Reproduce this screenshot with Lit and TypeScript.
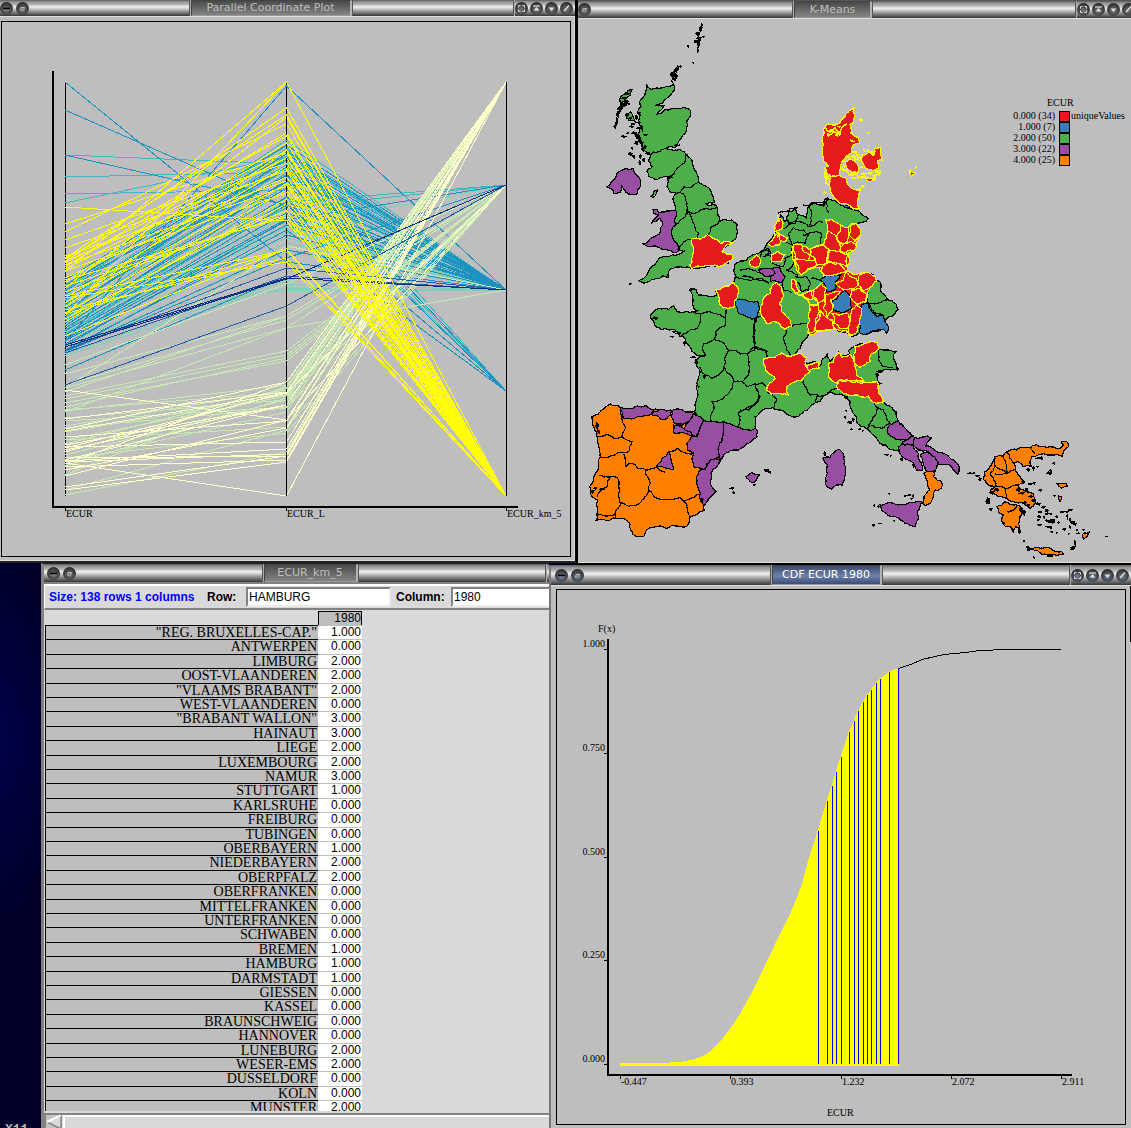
import { LitElement, html, svg, css } from "lit";
import { customElement, property } from "lit/decorators.js";

type Pt = [number, number];

/* ---------- title bar ---------- */

const GLYPHS: Record<string, unknown> = {
  minus: svg`<path d="M3 6.5H10" stroke="#000" stroke-width="1.6"/><path d="M3 8H10" stroke="#999" stroke-width=".6"/>`,
  menu: svg`<path d="M4 8.500L5 5H9L8 8.500Z" fill="#bbb"/><path d="M5.500 7H7.500" stroke="#333"/>`,
  full: svg`<path d="M3.500 5.500V3.500H5.500M7.500 3.500H9.500V5.500M9.500 7.500V9.500H7.500M5.500 9.500H3.500V7.500" fill="none" stroke="#ddd"/>`,
  shade: svg`<path d="M3 4H10" stroke="#ddd" stroke-width="1.200"/><path d="M6.500 5L9.500 8.500H3.500Z" fill="#ddd"/>`,
  down: svg`<path d="M3.500 5.500H9.500L6.500 9Z" fill="#ddd"/>`,
  close: svg`<path d="M4 9L9 3.500" stroke="#ddd" stroke-width="1.500"/>`,
};

const NAMES: Record<string, string> = {
  minus: "Iconify",
  menu: "Window menu",
  full: "Full screen",
  shade: "Shade",
  down: "Lower",
  close: "Close",
};

@customElement("title-bar")
class TitleBar extends LitElement {
  @property() caption = "";
  @property({ attribute: false }) left: string[] = ["minus", "menu"];
  @property({ attribute: false }) right: string[] = ["full", "shade", "down", "close"];

  static styles = css`
    :host {
      display: flex;
      align-items: stretch;
      flex: none;
      overflow: hidden;
      background: linear-gradient(#5c5c5c 0, #949494 12%, #b4b4b4 28%, #ededed 42%, #d6d6d6 52%, #a4a4a4 66%, #6a6a6a 84%, #343434 100%);
    }
    .group {
      display: flex;
      align-items: center;
      flex: none;
      gap: 3px;
      padding-left: var(--lead, 0);
    }
    .tray {
      display: flex;
      align-items: center;
      flex: none;
      gap: 2px;
      box-sizing: border-box;
      width: var(--tray, 62px);
      padding-left: 1px;
      border-left: 1px solid #555;
      box-shadow: inset 1px 0 #aaa;
    }
    .middle {
      flex: 1;
      display: flex;
      justify-content: center;
    }
    .plate {
      box-sizing: border-box;
      min-width: var(--plate, 94px);
      margin: 0;
      display: flex;
      align-items: center;
      justify-content: center;
      font: 11px/12px "DejaVu Sans", sans-serif;
      color: var(--ink, #bebebe);
      background: var(--plate-fill, linear-gradient(#4a4a4a, #848484));
      border: 1px solid #444;
      border-right: 2px solid #b4b4b4;
      border-bottom-color: #999;
      box-shadow: -1px 0 #aaa, -2px 0 #555, 1px 0 #555;
      white-space: nowrap;
    }
    button {
      flex: none;
      width: 13px;
      height: 13px;
      padding: 0;
      border: 0;
      border-radius: 50%;
      background: radial-gradient(circle at 50% 60%, var(--knob, #777), #333 65%, #000);
    }
    svg {
      display: block;
    }
  `;

  private knob(kind: string) {
    return html`<button aria-label=${NAMES[kind]}>
      <svg width="13" height="13" viewBox="0 0 13 13">${GLYPHS[kind]}</svg>
    </button>`;
  }

  render() {
    return html`
      <div class="group">${this.left.map((k) => this.knob(k))}</div>
      <div class="middle"><h2 class="plate">${this.caption}</h2></div>
      <div class="tray">${this.right.map((k) => this.knob(k))}</div>
    `;
  }
}

/* ---------- parallel coordinate plot ---------- */

const CREAM = "#ffffcc";
const LIME = "#c7e9b4";
const TEAL = "#7fcdbb";
const AQUA = "#41b6c4";
const BLUE = "#1d91c0";
const ROYAL = "#225ea8";
const NAVY = "#0c2c84";
const GOLD = "#ffff00";

/* Each record: colour, height on the third axis, then pairs of heights on the first two. */
const RECORDS: [string, number, string][] = [
  [TEAL, 290, "296,215 310,218 322,228 325,232 328,238 335,230 332,226 340,216 345,243 350,252 356,284 338,288 319,290"],
  [TEAL, 185, "318,227 354,280"],
  [AQUA, 290, "155,164 177,172 194,190 203,157 290,140 295,145 301,149 306,156 313,160 318,168 322,173 326,181 330,185 334,198 338,188 285,152 300,170"],
  [AQUA, 185, "320,208 334,202"],
  [AQUA, 391, "282,146 305,175 298,165"],
  [BLUE, 290, "82,262 110,207 155,205 342,86 280,145 286,151 291,154 299,160 304,167 309,175 316,182 323,188 328,197 331,202 335,213 338,219 341,221 344,225 350,235 352,250 286,170 294,176"],
  [BLUE, 185, "346,220 352,258"],
  [BLUE, 391, "312,158 326,180 340,205 352,230"],
  [BLUE, 290, "370,276"],
  [LIME, 185, "365,284 374,316 385,320 388,328 392,316 396,351 399,355 403,361 407,358 411,385 418,400 421,407 426,390 432,395 440,427 458,433"],
  [LIME, 290, "388,246 412,328"],
  [LIME, 82, "475,386 455,400 490,430 495,452 466,398 444,388 410,392 440,396 428,408 462,412"],
  [CREAM, 82, "429,382 431,393 437,421 390,420 419,392 445,405 447,442 450,405 460,405 461,449 452,392 458,456 462,454 464,382 470,428 487,456 490,462 467,460 463,496"],
  [CREAM, 185, "448,393 476,420"],
  [ROYAL, 185, "385,306"],
  [ROYAL, 290, "350,268 353,276"],
  [NAVY, 290, "345,278"],
  [NAVY, 185, "347,279"],
  [GOLD, 496, "272,82 316,82 262,108 258,115 288,117 232,124 267,133 259,136 282,143 263,151 224,153 307,150 269,158 240,163 298,166 261,169 248,171 278,177 256,181 303,184 265,186 313,190 271,193 322,199 319,204 292,211 286,215 280,217 207,221 336,249 314,250 296,250 310,258 298,262"],
];

const AXES = [65, 286, 506];

@customElement("parallel-plot")
class ParallelPlot extends LitElement {
  static styles = css`
    :host {
      display: flex;
      flex: 1;
      min-height: 0;
    }
    svg {
      flex: 1;
      min-width: 0;
    }
    text {
      font: 10px "Liberation Serif", serif;
    }
  `;

  render() {
    return html`<svg viewBox="0 17 574 543" role="img" aria-label="Parallel coordinate plot of ECUR">
      <g shape-rendering="crispEdges" fill="none" stroke="#000">
        <rect x="1.500" y="21.500" width="569" height="535" />
        <path d="M53 71V507H518" stroke-width="2" />
        ${AXES.map((x) => svg`<path d="M${x + 0.5} 82V496M${x + 0.5} 507v4"/>`)}
        ${RECORDS.map(([color, end, pairs]) =>
          pairs.split(" ").map((p) => {
            const [a, b] = p.split(",");
            return svg`<path stroke=${color} d="M65 ${a}L286.500 ${b}L506 ${end}"/>`;
          })
        )}
        <path d="M286.500 88V496" stroke-dasharray="5 2 3 4" />
      </g>
      <text x="66" y="517">ECUR</text>
      <text x="287" y="517">ECUR_L</text>
      <text x="507" y="517">ECUR_km_5</text>
    </svg>`;
  }
}

/* ---------- choropleth map ---------- */

/* The outlines are digitised on four sheets, three units to the pixel.
   A letter in a path switches to the sheet with that origin. */
const SHEETS: Record<string, Pt> = { a: [577, 0], b: [740, 90], c: [577, 270], d: [740, 330] };

function digitise(src: string): Pt[] {
  let origin: Pt = [0, 0];
  const pts: Pt[] = [];
  for (const token of src.trim().split(/\s+/)) {
    if (SHEETS[token]) {
      origin = SHEETS[token];
      continue;
    }
    const [x, y] = token.split(",").map(Number);
    pts.push([origin[0] + x / 3, origin[1] + y / 3]);
  }
  return pts;
}

/* Midpoint displacement seeded by the two ends, so a shared border stays shared. */
function wiggle(p: Pt, q: Pt, out: Pt[]) {
  const dx = q[0] - p[0];
  const dy = q[1] - p[1];
  const len = Math.hypot(dx, dy);
  if (len > 3) {
    const seed = Math.sin((p[0] + q[0]) * 12.9898 + (p[1] + q[1]) * 78.233) * 43758.5453;
    const k = (seed - Math.floor(seed) - 0.5) * 0.3;
    const flip = dx < 0 || (dx === 0 && dy < 0) ? -1 : 1;
    const m: Pt = [(p[0] + q[0]) / 2 - dy * k * flip, (p[1] + q[1]) / 2 + dx * k * flip];
    wiggle(p, m, out);
    wiggle(m, q, out);
  } else {
    out.push(q);
  }
}

function trace(src: string, closed: boolean): string {
  const pts = digitise(src);
  const out: Pt[] = [pts[0]];
  for (let i = 1; i < pts.length; i++) wiggle(pts[i - 1], pts[i], out);
  if (closed) wiggle(pts[pts.length - 1], pts[0], out);
  return "M" + out.map(([x, y]) => x.toFixed(1) + " " + y.toFixed(1)).join("L") + (closed ? "Z" : "");
}

const RED = "#e41a1c";
const STEEL = "#377eb8";
const GREEN = "#4daf4a";
const PURPLE = "#984ea3";
const ORANGE = "#ff7f00";

const GREENS = [
  "a 210,257 222,268 240,264 262,262 275,260 290,252 292,270 280,285 262,300 248,312 235,316 260,318 250,332 240,342 262,330 285,326 310,326 338,328 340,345 330,362 328,385 318,405 305,425 295,436 308,434 290,442 262,446 290,452 310,450 325,460 345,480 350,500 358,520 364,545 385,556 400,570 408,590 412,606 385,610 415,615 422,635 428,655 425,665 440,658 465,660 480,672 481,692 478,712 465,724 440,745 435,755 465,765 455,790 400,797 345,805 335,802 312,800 290,805 280,808 275,832 255,828 232,838 215,845 200,850 185,842 205,830 215,815 232,795 245,775 275,770 300,765 325,752 306,752 300,730 288,715 285,690 296,675 292,658 300,642 295,630 292,610 290,590 298,580 278,575 270,560 272,540 285,532 260,530 235,538 215,528 210,515 225,500 215,480 222,465 205,455 195,440 190,420 185,400 192,380 185,365 190,345 182,335 192,320 188,305 200,290 205,275",
  "b 262,325 285,332 310,348 330,356 355,362 372,378 384,386 370,396 352,400 362,425 358,440 348,462 345,480 325,487 328,505 322,530 320,545 345,555 375,548 400,555 410,570 422,578 420,600 440,625 470,645 475,658 455,680 440,685 435,700 445,720 440,730 430,718 400,725 375,735 358,728 335,740 320,725 290,718 250,722 215,735 205,735 200,745 185,765 d 180,55 165,75 185,75 200,100 232,98 238,110 250,85 262,72 268,95 272,92 295,68 300,80 330,75 325,62 345,48 370,42 410,38 415,58 435,60 468,66 460,85 468,105 475,118 445,118 420,125 408,135 412,150 422,160 412,165 418,200 430,212 455,232 468,245 475,275 495,300 520,320 500,345 478,358 450,358 420,340 400,315 380,295 350,275 340,250 330,215 320,200 300,192 270,185 250,200 240,215 215,225 185,250 175,260 145,255 115,240 80,235 45,260 45,290 c 535,475 500,478 480,470 440,455 410,455 380,450 352,425 355,410 362,370 365,320 368,300 360,290 355,270 385,258 345,245 330,220 325,205 310,200 300,185 270,178 235,170 230,155 220,135 235,120 275,118 290,108 300,125 330,125 365,122 350,115 348,90 338,60 358,60 365,75 400,80 420,75 415,60 440,50 470,38 475,15 a 472,795 490,783 510,778 525,765 545,760 565,742 580,720 598,690 b 112,395 122,375 135,395 140,385 145,365 165,358 180,375 200,385 205,350 225,340 250,345",
  "a 222,590 230,575 240,570 238,580 228,592",
  "a 165,268 160,285 140,305 130,312 128,298 145,280",
  "a 145,345 160,335 168,350 175,365 155,360",
  "a 280,220 290,215 295,235 285,240",
];

const PURPLES = [
  "a 228,630 240,628 245,638 262,636 280,632 295,630 300,642 292,658 296,675 285,690 288,715 300,730 306,752 290,758 275,752 255,748 235,738 215,740 200,732 215,722 235,708 248,702 250,688 255,665 248,655 225,668 230,658 240,650 245,645 230,640",
  "a 90,560 105,545 120,520 140,508 170,505 178,525 192,540 190,560 180,582 155,582 145,575 135,560 128,578 110,580",
  "b 55,538 95,535 105,550 85,560 60,548",
  "b 95,535 118,532 122,542 135,560 120,578 92,575 90,560 105,550",
  "d 450,285 475,272 505,305 520,320 500,330 480,330 455,320 442,310",
  "d 500,330 520,318 525,325 520,345 485,340",
  "d 525,322 575,322 558,348 600,368 640,390 658,412 652,432 640,420 628,405 590,400 570,370 535,360 520,345",
  "d 475,350 485,342 520,347 535,370 545,400 548,420 530,420 515,395 485,380",
  "d 540,375 565,368 595,400 585,425 560,425 550,400",
  "d 420,525 445,518 475,525 500,522 530,515 545,515 532,545 530,575 525,590 495,580 465,560 425,542",
  "d 248,385 270,382 295,358 310,372 312,400 308,465 290,465 275,478 260,470 262,430 262,405",
  "d 18,440 35,428 58,435 50,450 40,458 25,448",
  "d 75,422 92,425 92,430",
];

const IBERIA =
  "c 542,485 540,500 505,525 470,540 440,555 432,570 420,590 402,610 400,640 418,665 395,685 380,705 382,722 355,735 340,740 330,768 300,768 235,770 205,785 200,800 180,800 160,780 158,760 140,745 115,745 95,752 58,750 60,730 62,690 40,670 38,650 50,625 65,595 70,560 62,520 60,490 50,470 45,440 75,420 100,402 130,412 180,408 230,418 280,420 300,425 330,425 352,425 380,450 410,455 440,455 480,470 500,478 535,475";

const SPANISH = [
  "c 130,412 180,408 230,418 222,432 190,440 165,447 140,445",
  "c 222,432 230,425 250,418 285,422 280,435 258,450 245,440",
  "c 285,422 310,418 350,430 335,455 315,465 290,458",
  "c 350,430 380,450 370,470 358,500 340,485 320,475 335,455",
  "c 290,465 320,475 340,485 345,497 325,490 290,488",
  "c 380,450 410,455 440,455 438,490 425,530 430,560 408,568 380,600 350,590 345,570 350,550 330,540 330,520 345,500 360,500 370,470",
  "c 440,455 480,470 500,478 535,475 542,485 540,500 505,525 470,540 440,555 430,570 425,530 438,490",
  "c 400,570 430,570 420,590 402,610 400,640 418,665 395,685 380,710 370,670 358,640 358,620 370,600 385,598",
  "c 238,590 255,565 275,545 285,580 288,600 260,592",
];

const ORANGES = [
  "d 552,430 560,425 583,422 580,440 605,455 605,475 585,480 580,495 570,520 555,528 548,520 555,495 570,480 560,450",
  "d 965,335 980,335 985,350 970,365 968,380 930,375 905,372 875,380 870,400 875,410 850,410 835,395 822,400 825,420 840,440 850,460 830,465 850,480 880,490 885,508 880,530 870,535 850,520 820,515 800,505 775,500 760,490 750,480 765,470 740,460 730,445 735,425 750,410 765,380 790,378 800,365 830,360 850,352 885,345 920,352 960,355 970,345",
  "d 770,530 795,515 830,525 845,535 840,560 835,580 842,610 828,590 820,605 812,590 795,588 785,570 790,555 775,545",
  "d 860,650 880,655 900,655 935,658 965,665 970,672 935,675 900,668 862,662",
  "d 1030,610 1048,605 1040,620 1030,628",
  "d 952,462 978,460 982,470 965,475",
  "d 955,498 965,500 960,515",
  "d 925,572 942,570 938,580",
];

const BLUES = [
  "c 475,90 500,88 540,95 550,115 540,140 525,148 505,138 485,130 478,110",
  "b 240,570 260,555 305,552 288,575 285,600 260,605 255,585",
  "b 275,635 305,608 315,600 332,630 335,655 310,668 280,660",
  "b 365,645 385,640 395,665 410,680 430,678 435,695 445,720 440,730 430,718 400,722 375,735 358,728 358,690",
  "b 312,350 328,346 330,355",
];

/* Ground under the German cluster, so that neighbouring regions meet without a gap. */
const RED_GROUND =
  "b 258,390 275,388 300,405 325,412 335,402 350,400 362,425 358,440 348,462 345,480 320,490 328,505 322,530 320,545 345,555 375,548 405,560 410,572 390,592 382,605 378,635 362,655 358,700 350,728 332,738 320,722 290,718 250,722 215,735 205,730 210,690 208,645 235,642 220,625 195,624 188,612 220,600 245,580 255,562 242,545 240,532 205,538 185,555 175,545 165,515 160,465 185,465 210,480 250,465 262,425";

const REDS = [
  "a 346,715 370,718 392,704 408,716 430,730 455,725 466,728 440,745 435,755 465,765 468,775 450,788 440,795 425,800 400,797 370,800 345,805 338,795 345,785 350,755 346,735",
  "b 343,53 338,65 345,80 340,98 330,104 333,130 355,142 358,160 338,168 332,190 315,205 302,225 300,255 272,258 260,250 255,235 265,228 250,212 247,190 250,165 248,140 252,115 265,102 300,98 315,80 328,62",
  "b 272,260 300,255 318,265 325,285 350,300 362,295 355,320 357,355 340,357 325,345 300,340 280,320 272,300 268,280",
  "b 315,215 330,205 345,215 357,235 352,248 330,242",
  "b 366,195 385,188 402,195 405,175 420,172 425,205 412,212 415,235 400,242 385,238 370,222",
  "b 365,260 375,258 390,265 400,270 385,275",
  "b 508,238 526,250 515,258",
  "b 160,465 185,465 190,485 210,495 205,510 180,512 165,500",
  "b 165,510 200,512 225,510 232,525 205,535 185,555 175,545",
  "b 212,475 235,468 265,472 262,500 258,520 232,525 225,505 210,495",
  "b 258,390 275,388 300,405 290,440 262,425",
  "b 300,405 325,412 328,435 310,462 298,455 290,440",
  "b 335,402 350,400 362,425 358,440 345,455 328,435",
  "b 262,425 285,435 300,460 298,485 270,480 250,465",
  "b 310,462 330,455 348,462 345,480 318,488 300,480",
  "b 270,482 298,485 325,495 320,530 300,522 262,510",
  "b 245,545 262,515 300,522 318,545 300,550 255,558",
  "b 288,580 310,570 318,548 350,565 355,585 340,598 310,600",
  "b 355,562 375,548 405,560 410,572 390,592 370,602 355,585",
  "b 335,600 360,595 380,610 375,635 350,642 330,620",
  "b 220,600 245,580 258,595 255,625 235,640 220,620",
  "b 188,612 212,602 218,628 195,622",
  "b 255,615 300,605 272,630 278,660 262,680 250,655",
  "b 208,645 235,645 238,665 222,725 205,728 210,690",
  "b 240,660 258,680 278,690 284,715 250,722 225,722",
  "b 275,670 320,668 328,690 322,715 300,715 285,700",
  "b 335,660 350,645 365,655 358,700 350,728 332,735 325,715 330,690",
  "b 155,568 168,575 180,605 165,608 155,595",
  "b 110,395 122,385 128,415 105,425 106,405",
  "b 84,462 105,432 120,445 118,465 95,470",
  "b 118,432 142,442 135,455 120,450",
  "b 28,512 50,495 62,510 55,530 35,530",
  "b 93,495 115,484 134,495 125,514 95,516",
  "b 110,578 125,592 130,620 118,640 125,665 150,690 155,710 135,718 118,700 80,700 65,680 62,650 75,620 90,610 95,590",
  "c 415,60 440,50 468,38 480,50 482,80 470,112 450,115 430,105 425,80",
  "d 72,85 105,82 125,68 140,78 165,75 185,72 200,85 195,105 210,125 190,145 165,155 140,170 145,195 120,190 95,192 80,180 85,165 105,145 85,130 75,110",
  "d 200,108 235,98 238,115 205,122",
  "d 265,100 280,98 295,68 305,82 330,72 342,90 345,110 350,135 375,155 350,150 300,148 290,160 265,140 270,120",
  "d 345,50 370,42 412,38 415,58 395,70 390,95 360,112 345,100 340,75",
  "d 298,150 350,155 412,155 415,190 430,215 402,218 385,198 345,195 310,190 290,172",
];

/* Region borders and coastal scraps inked in black. */
const BORDERS = [
  "a 215,465 245,455 262,446",
  "a 325,460 322,490 300,505 290,522 270,535",
  "a 364,545 345,560 320,560 310,578 298,580",
  "a 310,578 325,590 330,610 330,630 345,640 400,628 420,622",
  "a 330,630 325,650 310,660 296,675",
  "a 332,635 345,660 355,690 365,700 360,715",
  "a 395,704 400,685 425,670 428,655",
  "a 300,750 320,725 346,718",
  "c 60,500 90,492 110,505 135,500 165,515 155,545 120,550 70,560",
  "c 135,500 145,475 135,450 130,412",
  "c 140,552 145,590 165,580 205,600 220,640 215,660 195,690 180,705 130,698 128,660 122,625 100,620 65,615",
  "c 205,600 240,592 265,607",
  "c 215,660 240,685 310,682 330,705 340,740",
  "c 315,692 330,690 365,672",
  "c 130,698 115,725 115,745",
  "c 58,735 90,738 115,730",
  "c 100,620 90,650 62,680",
  "c 275,545 300,535 350,550",
  "c 475,15 500,28 545,30 575,40",
  "c 345,125 375,130 405,128 430,135 445,145 450,115",
  "c 370,130 368,160 360,175 325,190 310,200",
  "c 445,145 440,170 415,185 412,208 380,220 385,258",
  "c 412,208 440,220 455,240 490,252 515,250 535,235 528,200 530,165 540,140",
  "c 455,240 440,290 430,310 405,325 385,315 368,290",
  "c 440,290 465,320 470,335 495,335 510,320 515,270 510,252",
  "c 470,335 455,370 440,385 405,395 410,420 402,452",
  "c 495,335 510,350 535,345 545,380 520,410 485,430 485,470",
  "c 535,235 570,245 570,260",
  "c 535,345 555,338 568,350",
  "d 20,72 40,52 75,62 82,80",
  "d 40,0 45,52",
  "b 62,680 45,685 40,720",
  "d 140,0 135,40 150,75",
  "b 135,718 140,725",
  "b 205,700 165,702 155,710",
  "d 45,160 60,200 45,225 25,240 0,240",
  "d 80,185 110,205 100,235",
  "d 190,150 200,175 210,195 240,200 275,180 290,175",
  "d 225,215 230,200 250,200",
  "d 415,60 415,90 430,110 460,112",
  "d 402,220 412,235 400,260 390,280 380,295",
  "d 410,232 430,240 440,265 450,280 425,295 395,285",
  "d 765,385 765,410 800,430 800,405 790,380",
  "d 765,410 750,432 770,470 800,475 835,465",
  "d 800,365 810,385 822,400",
  "d 868,352 885,372",
  "d 765,432 800,430 825,418",
  "d 795,475 800,505",
  "d 800,545 820,540 835,525",
  "b 385,640 410,640 440,630",
  "b 382,600 385,640",
  "b 388,640 395,660 430,678",
  "b 262,325 265,370",
  "b 205,350 215,375 208,410",
  "b 140,385 145,400 175,395 205,410 235,395 250,400",
  "b 155,465 145,430 160,412 190,420 205,435",
  "b 190,435 225,425 245,430 245,465",
  "b 205,435 195,460 160,462",
  "b 175,375 165,400 140,410 128,415",
  "b 135,455 160,465 155,495 135,505 130,530",
  "b 155,495 165,510 140,540 175,555",
  "b 165,560 200,560 212,580 205,600 185,605 170,575",
  "b 212,565 240,570",
  "b 5,560 45,570 85,575",
  "b 0,540 60,548",
  "b 60,500 70,480 88,485 75,495 95,500",
  "b 65,485 85,475 92,490 70,500",
  "b 90,515 110,525 130,530",
  "b 125,575 130,600 155,608",
  "b 115,370 150,356 175,352",
  "b 190,345 225,336 250,338 258,325",
  "b 250,350 262,322",
];

const YELLOW_SCRAPS = [
  "b 255,110 270,128 285,112 300,130 320,100",
  "b 265,135 285,125 300,135",
  "b 360,85 368,92",
  "b 383,127 388,129",
  "b 335,185 350,190 360,205",
  "b 350,250 355,262 330,262",
  "b 370,180 390,185 405,190",
  "b 330,150 345,155",
  "b 420,240 415,252 400,258 405,270",
  "b 305,232 318,240 330,255",
  "b 255,262 260,280 270,290",
  "b 365,285 372,290",
  "b 340,195 352,208 362,212",
  "b 258,240 254,258 262,270",
  "b 108,425 118,432 112,445",
  "b 112,375 118,395",
  "b 165,608 190,620 210,640",
];

/* Islands too small to fill: sheet, then x,y centre and the length and height of each scrap. */
const ISLETS = [
  "a 374,75,4,10 372,84,8,8 370,90,8,10 362,102,12,12 366,115,14,8 364,125,10,10 355,125,8,8 364,135,7,14 362,152,3,16 333,139,4,5 349,188,3,3 380,110,5,3",
  "a 303,202,6,8 299,207,8,8 296,212,8,10 288,225,12,12 298,228,8,10 292,238,12,8 311,200,3,8 285,245,5,4",
  "a 150,282,12,4 142,295,16,6 150,305,10,6 145,312,12,8 138,315,16,8 132,322,12,8 128,328,14,10 124,338,8,10 122,345,8,12 120,362,6,14 117,372,6,8 113,380,6,10 155,312,5,4",
  "a 150,345,10,10 160,355,8,6 168,372,10,6 178,352,8,12 185,340,8,8 185,368,10,6 165,380,12,5 172,400,14,8 180,408,12,12 140,410,14,5 185,415,12,12 188,424,10,10 178,430,8,10 195,430,8,8 205,405,10,6 160,462,12,8 170,470,8,8 190,470,6,12 188,488,5,12 200,480,6,10 212,460,10,8 205,440,6,8 198,448,8,12 165,445,5,5 152,400,6,5 195,385,4,14 185,385,10,6",
  "a 160,852,5,4 345,868,20,4",
  "c 350,262,12,3 358,278,10,8 322,220,6,10 305,190,12,4 285,200,6,3 235,145,14,8 290,185,8,3 370,305,6,3 382,320,6,8 365,350,4,4",
  "c 60,470,8,20 65,485,6,10 45,665,12,10 55,655,8,6 75,658,18,3 308,465,20,10 375,690,8,10",
  "c 465,655,10,5 470,668,5,5 530,645,6,2 565,600,10,2",
  "d 254,372,5,12 330,278,12,8 340,270,5,10 315,262,4,4 318,242,4,2 335,298,4,3 360,298,6,3 368,302,4,3 440,374,10,3 452,378,4,3 485,388,6,8 520,405,4,10",
  "d 420,125,18,8 412,135,10,8 472,117,8,8 318,202,10,8",
  "d 448,491,3,2 495,498,5,3 508,496,7,4 520,498,4,8 515,506,6,3 403,527,3,5 415,530,5,5 400,586,6,5 422,580,8,2 462,572,3,3",
  "d 690,430,10,3 702,430,6,3 712,438,10,6 720,448,8,8 745,510,10,12 740,515,6,6 752,538,8,8 755,488,14,10 745,520,8,4 770,480,14,8",
  "d 850,455,10,6 870,462,12,5 882,460,8,6 835,480,14,8 860,480,8,12 845,490,14,6 872,500,10,6 880,512,12,5 895,522,14,6 910,532,10,6 920,542,10,8 932,552,6,6 850,548,14,14 842,540,10,14 855,518,8,6 865,525,8,6 865,420,10,8 880,415,6,10 892,410,6,4 895,385,14,4 905,385,6,10",
  "d 942,400,7,4 928,430,14,8 932,422,6,6 901,481,8,8 943,498,4,3 965,546,12,4 980,545,8,3 990,540,12,6 900,546,10,5 920,552,8,5 898,560,10,5 912,562,5,5 895,570,6,6 898,585,10,6 920,572,8,6 930,576,10,4 942,574,6,5 922,590,12,4 932,592,6,8 950,560,6,5 955,578,5,5 972,598,8,5 935,605,6,4 950,608,4,3 982,560,4,12 990,570,6,10 998,578,12,8 1005,582,8,6 990,590,4,6 1010,600,5,5 1015,610,6,3 1030,600,4,5 1100,619,4,2 985,612,4,2 1005,640,4,14 1000,652,12,6 997,658,8,4 852,633,4,4 838,605,6,12 818,600,5,10 882,683,3,4 930,678,20,2 865,655,6,10 790,580,6,8",
];

const YELLOW_DOTS = [
  "b 362,90,10,6 386,128,5,3 388,166,2,2 527,234,2,4 425,210,6,4 372,178,4,3 383,180,5,3 345,185,6,3 340,200,14,6 352,195,6,5 322,200,8,6 310,212,5,5 312,228,6,8 345,210,6,6 345,250,18,10 355,260,4,8 335,255,12,5 310,240,8,6 258,245,6,18 262,262,8,10 258,278,6,6 255,308,6,4 275,122,12,10 290,135,10,8 265,135,8,8 298,110,8,4 398,195,6,6 410,245,10,8 418,250,6,10 405,262,6,14 362,262,4,6 370,252,14,4 390,250,14,5 368,288,10,6 355,300,8,5 365,232,6,4 362,205,4,8",
];

function scraps(lists: string[], color: string) {
  return lists.map((line) => {
    const [sheet, ...items] = line.split(" ");
    const [ox, oy] = SHEETS[sheet];
    return items.map((item) => {
      const [x, y, w, h] = item.split(",").map(Number);
      const ring = [
        [x - w / 2, y],
        [x - w / 6, y - h / 2],
        [x + w / 2, y - h / 4],
        [x + w / 5, y + h / 2],
      ].map(([px, py]) => `${(ox + px / 3).toFixed(1)},${(oy + py / 3).toFixed(1)}`);
      return svg`<polygon points=${ring.join(" ")} fill=${color} stroke=${color} stroke-width="1"/>`;
    });
  });
}

const area = (fill: string, stroke: string) => (src: string) =>
  svg`<path d=${trace(src, true)} fill=${fill} stroke=${stroke}/>`;

const CLASSES: [string, string][] = [
  ["0.000 (34)", RED],
  ["1.000 (7)", STEEL],
  ["2.000 (50)", GREEN],
  ["3.000 (22)", PURPLE],
  ["4.000 (25)", ORANGE],
];

@customElement("cluster-map")
class ClusterMap extends LitElement {
  static styles = css`
    :host {
      display: flex;
      flex: 1;
      min-height: 0;
    }
    svg {
      flex: 1;
      min-width: 0;
    }
    text {
      font: 10px "Liberation Serif", serif;
    }
    .count {
      text-anchor: end;
    }
  `;

  render() {
    return html`<svg viewBox="578 19 553 543" role="img" aria-label="Map of European regions by cluster">
      <g shape-rendering="crispEdges" stroke-width="1.200">
        ${GREENS.map(area(GREEN, "#000"))} ${area(ORANGE, "#000")(IBERIA)}
        ${PURPLES.map(area(PURPLE, "#000"))} ${SPANISH.map(area(PURPLE, "#000"))}
        ${ORANGES.map(area(ORANGE, "#000"))}
        ${BORDERS.map((b) => svg`<path d=${trace(b, false)} fill="none" stroke="#000"/>`)}
        ${area(RED, "#ff0")(RED_GROUND)} ${BLUES.map(area(STEEL, "#000"))} ${REDS.map(area(RED, "#ff0"))}
        ${YELLOW_SCRAPS.map((b) => svg`<path d=${trace(b, false)} fill="none" stroke="#ff0" stroke-width="1.500"/>`)}
        ${scraps(ISLETS, "#000")} ${scraps(YELLOW_DOTS, "#ff0")}
      </g>
      <text x="1047" y="106">ECUR</text>
      ${CLASSES.map(
        ([label, fill], i) => svg`
          <text class="count" x="1055" y=${119 + i * 11}>${label}</text>
          <rect x="1059.500" y=${111.5 + i * 11} width="10" height="10" fill=${fill} stroke="#000"/>`
      )}
      <text x="1071" y="119">uniqueValues</text>
    </svg>`;
  }
}

/* ---------- cumulative distribution ---------- */

const CURVE: Pt[] = [
  [620, 1063], [660, 1063], [681, 1062], [691, 1060], [704, 1056], [713, 1049], [721, 1041], [730, 1029],
  [739, 1016], [754, 989], [764, 968], [776, 943], [787, 921], [793, 908], [802, 885], [809, 859],
  [818, 831], [827, 801], [832, 786], [836, 772], [841, 757], [849, 732], [854, 721], [858, 711],
  [863, 702], [867, 695], [871, 690], [876, 683], [880, 679], [889, 672], [898, 668], [911, 664],
  [922, 659], [944, 654], [965, 652], [980, 650], [1007, 649], [1061, 649],
];

const MARKS = CURVE.filter(([x]) => x >= 818 && x <= 898);
const Y_TICKS: [number, string][] = [[649, "1.000"], [753, "0.750"], [857, "0.500"], [960, "0.250"], [1064, "0.000"]];
const X_TICKS: [number, string][] = [[620, "-0.447"], [730, "0.393"], [841, "1.232"], [951, "2.072"], [1061, "2.911"]];

@customElement("cdf-plot")
class CdfPlot extends LitElement {
  static styles = css`
    :host {
      display: flex;
      flex: 1;
      min-height: 0;
    }
    svg {
      flex: 1;
      min-width: 0;
    }
    text {
      font: 10px "Liberation Serif", serif;
    }
    .side {
      text-anchor: end;
    }
  `;

  render() {
    const line = (pts: Pt[]) => pts.map(([x, y]) => `${x} ${y + 0.5}`).join("L");
    const filled = CURVE.filter(([x]) => x <= 898);
    return html`<svg viewBox="551 586 580 542" role="img" aria-label="Cumulative distribution of ECUR, 1980">
      <g shape-rendering="crispEdges" fill="none" stroke="#000">
        <rect x="556.500" y="589.500" width="569" height="535" />
        <path d="M1130.500 586V642" />
        <path d="M${line(filled)}L898 1065L620 1065Z" fill="#ff0" stroke="#ff0" stroke-width="1" />
        <path d="M${line(CURVE.filter(([x]) => x >= 898))}" />
        ${MARKS.map(([x, y]) => svg`<path stroke="#00f" d="M${x + 0.5} ${y}V1064"/>`)}
        <path d="M608 639V1075H1072" stroke-width="2" />
        ${Y_TICKS.map(([y]) => svg`<path d="M604 ${y + 0.5}h4"/>`)}
        ${X_TICKS.map(([x]) => svg`<path d="M${x + 0.5} 1075v4"/>`)}
      </g>
      ${Y_TICKS.map(([y, label]) => svg`<text class="side" x="605" y=${y - 2}>${label}</text>`)}
      ${X_TICKS.map(([x, label]) => svg`<text x=${x + 1} y="1085">${label}</text>`)}
      <text x="598" y="632">F(x)</text>
      <text x="827" y="1116">ECUR</text>
    </svg>`;
  }
}

/* ---------- data table ---------- */

const ROWS: [string, string][] = [
  ['"REG. BRUXELLES-CAP."', "1.000"],
  ["ANTWERPEN", "0.000"],
  ["LIMBURG", "2.000"],
  ["OOST-VLAANDEREN", "2.000"],
  ['"VLAAMS BRABANT"', "2.000"],
  ["WEST-VLAANDEREN", "0.000"],
  ['"BRABANT WALLON"', "3.000"],
  ["HAINAUT", "3.000"],
  ["LIEGE", "2.000"],
  ["LUXEMBOURG", "2.000"],
  ["NAMUR", "3.000"],
  ["STUTTGART", "1.000"],
  ["KARLSRUHE", "0.000"],
  ["FREIBURG", "0.000"],
  ["TÜBINGEN", "0.000"],
  ["OBERBAYERN", "1.000"],
  ["NIEDERBAYERN", "2.000"],
  ["OBERPFALZ", "2.000"],
  ["OBERFRANKEN", "0.000"],
  ["MITTELFRANKEN", "0.000"],
  ["UNTERFRANKEN", "0.000"],
  ["SCHWABEN", "0.000"],
  ["BREMEN", "1.000"],
  ["HAMBURG", "1.000"],
  ["DARMSTADT", "1.000"],
  ["GIESSEN", "0.000"],
  ["KASSEL", "0.000"],
  ["BRAUNSCHWEIG", "0.000"],
  ["HANNOVER", "0.000"],
  ["LÜNEBURG", "2.000"],
  ["WESER-EMS", "2.000"],
  ["DÜSSELDORF", "0.000"],
  ["KÖLN", "0.000"],
  ["MÜNSTER", "2.000"],
];

@customElement("region-table")
class RegionTable extends LitElement {
  static styles = css`
    :host {
      display: flex;
      flex-direction: column;
      flex: 1;
      min-height: 0;
      background: #d9d9d9;
      font-family: "Liberation Sans", sans-serif;
    }
    .tools {
      display: flex;
      align-items: center;
      flex: none;
      box-sizing: border-box;
      height: 26px;
      padding-left: 4px;
      border-top: 2px solid #fff;
      border-left: 1px solid #fff;
      border-bottom: 2px solid #828282;
      overflow: hidden;
      font-size: 12px;
      font-weight: bold;
      white-space: nowrap;
    }
    .tools > * {
      flex: none;
    }
    .size {
      color: #00f;
      width: 158px;
    }
    .row-label {
      width: 39px;
    }
    .column-label {
      width: 55px;
      padding-left: 5px;
    }
    input {
      box-sizing: border-box;
      height: 20px;
      padding: 0 1px;
      border: 2px solid;
      border-color: #828282 #ececec #ececec #828282;
      border-radius: 0;
      background: #fff;
      font: 12px "Liberation Sans", sans-serif;
      color: #000;
      outline: none;
    }
    .row-entry {
      width: 145px;
    }
    .tools .column-entry {
      flex: 1;
      min-width: 0;
      border-right: 0;
    }
    .sheet {
      flex: 1;
      min-height: 0;
      overflow: hidden;
      padding: 1px 0 0 1px;
    }
    table {
      border-collapse: separate;
      border-spacing: 0;
      table-layout: fixed;
      width: 317px;
    }
    .names {
      width: 273px;
    }
    tr {
      height: 14px;
    }
    tbody tr:nth-child(5n + 2),
    tbody tr:nth-child(5n + 4) {
      height: 15px;
    }
    th,
    td {
      padding: 0;
      text-align: right;
      vertical-align: top;
      font-weight: normal;
      line-height: 13px;
      white-space: nowrap;
    }
    tbody th {
      background: #bebebe;
      border-top: 1px solid #000;
      border-left: 1px solid #000;
      font-family: "Liberation Serif", serif;
      font-size: 14px;
      padding-right: 1px;
    }
    td {
      background: #fff;
      border-top: 1px solid #bebebe;
      padding-right: 1px;
      font-size: 12px;
    }
    thead th {
      background: #bebebe;
      border: 1px solid #000;
      border-bottom: 0;
      font-size: 12px;
    }
    thead td {
      background: none;
      border: 0;
    }
    .scroller {
      display: flex;
      flex: none;
      box-sizing: border-box;
      height: 15px;
      margin-top: 2px;
      border-top: 2px solid #828282;
      border-left: 2px solid #828282;
      overflow: hidden;
    }
    .scroller button {
      flex: none;
      width: 16px;
      height: 16px;
      padding: 0;
      border: 0;
      background: #c3c3c3;
    }
    .scroller svg {
      display: block;
    }
    .thumb {
      flex: 1;
      margin-left: 1px;
      border-top: 2px solid #fff;
      border-left: 2px solid #fff;
    }
  `;

  render() {
    return html`
      <div class="tools">
        <span class="size">Size: 138 rows 1 columns</span>
        <label class="row-label" for="row">Row:</label>
        <input class="row-entry" id="row" .value=${"HAMBURG"} />
        <label class="column-label" for="column">Column:</label>
        <input class="column-entry" id="column" .value=${"1980"} />
      </div>
      <div class="sheet">
        <table>
          <colgroup>
            <col class="names" />
            <col />
          </colgroup>
          <thead>
            <tr>
              <td></td>
              <th scope="col">1980</th>
            </tr>
          </thead>
          <tbody>
            ${ROWS.map(([name, value]) => html`<tr><th scope="row">${name}</th><td>${value}</td></tr>`)}
          </tbody>
        </table>
      </div>
      <div class="scroller">
        <button aria-label="Scroll left">
          <svg width="16" height="16" viewBox="0 0 16 16">
            <path d="M1 7L15 0V14Z" fill="#d9d9d9" />
            <path d="M1 7L15 14V0" fill="none" stroke="#828282" stroke-width="1.500" />
            <path d="M1 7L15 0" stroke="#fff" stroke-width="2" />
          </svg>
        </button>
        <div class="thumb"></div>
      </div>
    `;
  }
}

/* ---------- desktop ---------- */

@customElement("app-root")
class AppRoot extends LitElement {
  static styles = css`
    :host {
      display: block;
    }
    .desktop {
      display: grid;
      grid-template-columns: minmax(0, 41fr) minmax(0, 508fr) minmax(0, 28fr) minmax(0, 554fr);
      grid-template-rows: minmax(0, 563fr) minmax(0, 2fr) minmax(0, 563fr);
      height: 100vh;
      background: radial-gradient(ellipse 60px 180px at 0 740px, #000048, transparent), #00002a;
    }
    .window {
      display: flex;
      flex-direction: column;
      box-sizing: border-box;
      min-width: 0;
      min-height: 0;
      overflow: hidden;
      background: #bebebe;
    }
    .body {
      display: flex;
      flex: 1;
      min-height: 0;
      border-top: 1px solid #dedede;
    }
    .parallel {
      grid-area: 1 / 1 / 2 / 4;
      border-right: 2px solid #000;
      border-bottom: 2px solid #222;
      --plate: 161px;
    }
    .parallel title-bar {
      height: 16px;
    }
    .parallel .body {
      border-right: 1px solid #dedede;
      border-bottom: 1px solid #dedede;
    }
    .map {
      grid-area: 1 / 4 / 3 / 5;
      border-left: 1px solid #000;
      border-top: 1px solid #555;
      border-bottom: 2px solid #000;
      --plate: 78px;
      --tray: 56px;
    }
    .map title-bar {
      height: 17px;
    }
    .map .body {
      border-bottom: 1px solid #dedede;
    }
    .data {
      grid-area: 2 / 2 / 4 / 3;
      border-left: 3px solid #828282;
      border-top: 1px solid #222;
      --lead: 3px;
      --plate: 94px;
      --tray: 4px;
    }
    .data title-bar {
      height: 18px;
      border-bottom: 2px solid #828282;
    }
    .data .body {
      border-top: 0;
      border-right: 2px solid #828282;
    }
    .cdf {
      grid-area: 3 / 3 / 4 / 5;
      border-left: 2px solid #777;
      --lead: 4px;
      --plate: 110px;
      --plate-fill: linear-gradient(#3c4a6c, #6c80a8 55%, #3c4c7c);
      --ink: #fff;
      --knob: #6d7f9c;
    }
    .cdf title-bar {
      height: 20px;
    }
    .note {
      grid-area: 3 / 1 / 4 / 2;
      align-self: end;
      justify-self: start;
      height: 5px;
      margin: 0 0 0 5px;
      overflow: hidden;
      font: bold 13px/13px "Liberation Mono", monospace;
      color: #b8b8b8;
    }
  `;

  render() {
    return html`<main class="desktop">
      <section class="window parallel">
        <title-bar caption="Parallel Coordinate Plot"></title-bar>
        <div class="body"><parallel-plot></parallel-plot></div>
      </section>
      <section class="window map">
        <title-bar caption="K-Means" .left=${["menu"]}></title-bar>
        <div class="body"><cluster-map></cluster-map></div>
      </section>
      <section class="window data">
        <title-bar caption="ECUR_km_5" .right=${[]}></title-bar>
        <div class="body"><region-table></region-table></div>
      </section>
      <section class="window cdf">
        <title-bar caption="CDF ECUR 1980"></title-bar>
        <div class="body"><cdf-plot></cdf-plot></div>
      </section>
      <p class="note">X11</p>
    </main>`;
  }
}
